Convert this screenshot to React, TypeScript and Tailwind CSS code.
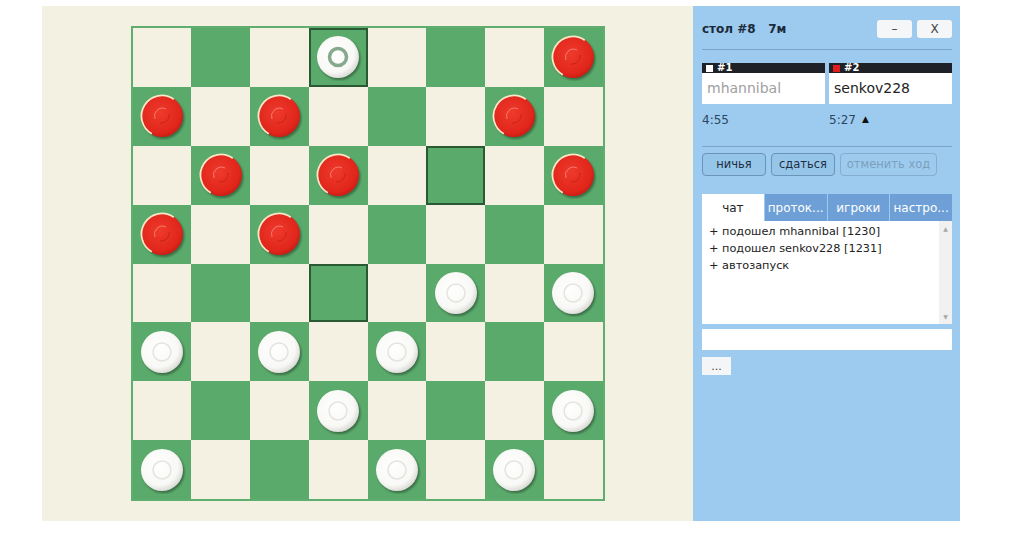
import React from "react";

type P = "r" | "w" | "ws";

const pieces: Record<string, P> = {
  "0-3": "ws", "0-7": "r",
  "1-0": "r", "1-2": "r", "1-6": "r",
  "2-1": "r", "2-3": "r", "2-7": "r",
  "3-0": "r", "3-2": "r",
  "4-5": "w", "4-7": "w",
  "5-0": "w", "5-2": "w", "5-4": "w",
  "6-3": "w", "6-7": "w",
  "7-0": "w", "7-4": "w", "7-6": "w",
};
const highlighted = new Set(["0-3", "2-5", "4-3"]);

function Piece({ kind }: { kind: P }) {
  const red = kind === "r";
  return (
    <svg width="48" height="48" viewBox="0 0 48 48" className="block">
      <defs>
        <filter id="pshadow" x="-20%" y="-20%" width="140%" height="140%">
          <feGaussianBlur stdDeviation="1.3" />
        </filter>
        <radialGradient id="redg" cx="45%" cy="42%" r="60%">
          <stop offset="0%" stopColor="#ee3a2c" />
          <stop offset="80%" stopColor="#e1261b" />
          <stop offset="100%" stopColor="#c81d14" />
        </radialGradient>
        <radialGradient id="whg" cx="42%" cy="40%" r="62%">
          <stop offset="0%" stopColor="#ffffff" />
          <stop offset="75%" stopColor="#f8f8f6" />
          <stop offset="100%" stopColor="#d9d9d4" />
        </radialGradient>
      </defs>
      <circle cx="25.5" cy="26" r="21" fill="rgba(0,0,0,0.35)" filter="url(#pshadow)" />
      <circle cx="24" cy="24" r="21" fill={red ? "url(#redg)" : "url(#whg)"} />
      {red ? (
        <>
          <path d="M13.75 41.75 A20.5 20.5 0 1 1 35.76 7.21" fill="none" stroke="#f6e8c8" strokeWidth="1.8" />
          <path d="M17 27 A8 8 0 0 1 28 17" fill="none" stroke="rgba(255,210,200,0.45)" strokeWidth="1" />
          <path d="M31 22 A8 8 0 0 1 22 31" fill="none" stroke="rgba(140,10,10,0.35)" strokeWidth="1" />
        </>
      ) : kind === "ws" ? (
        <circle cx="24" cy="24" r="8.5" fill="none" stroke="#86a98d" strokeWidth="3.5" />
      ) : (
        <>
          <circle cx="24" cy="24" r="9" fill="none" stroke="#e4e4df" strokeWidth="1.5" />
        </>
      )}
    </svg>
  );
}

function Board() {
  const cells = [];
  for (let r = 0; r < 8; r++) {
    for (let c = 0; c < 8; c++) {
      const key = `${r}-${c}`;
      const dark = (r + c) % 2 === 1;
      const hl = highlighted.has(key);
      const p = pieces[key];
      cells.push(
        <div
          key={key}
          className={`flex items-center justify-center ${dark ? "bg-[#5aaa6b]" : "bg-[#f4f1e2]"} ${hl ? "border-2 border-[#2a5a33]" : ""}`}
        >
          {p && <Piece kind={p} />}
        </div>
      );
    }
  }
  return (
    <div className="border-2 border-[#5fae70] bg-[#5fae70]">
      <div className="grid grid-cols-8 grid-rows-8 w-[470px] h-[471px]">{cells}</div>
    </div>
  );
}

function PlayerBox({ num, sq, name, dim }: { num: string; sq: string; name: string; dim?: boolean }) {
  return (
    <div className="flex-1 flex flex-col">
      <div className="h-[10px] bg-[#1e2226] flex items-center px-[4px] gap-[4px]">
        <span className={`w-[7px] h-[7px] ${sq}`} />
        <span className="text-[10px] leading-none font-bold text-white">{num}</span>
      </div>
      <div className={`h-[31px] bg-white flex items-center px-[5px] text-[14px] ${dim ? "text-[#a0a0a0]" : "text-[#222]"}`}>
        {name}
      </div>
    </div>
  );
}

export default function App() {
  return (
    <div className="w-[1024px] h-[549px] bg-white" style={{ fontFamily: '"DejaVu Sans", Verdana, sans-serif' }}>
      <div className="absolute left-[42px] top-[6px] flex w-[918px] h-[515px]">
        <div className="w-[651px] h-full bg-[#f3f1e1] flex items-center justify-center">
          <Board />
        </div>
        <div className="w-[267px] h-full bg-[#9dcbef] pl-[9px] pr-[8px] pt-[14px] flex flex-col">
          <div className="flex items-center justify-between h-[18px]">
            <div className="text-[12px] font-bold text-[#1a2a3a] whitespace-pre">стол #8   7м</div>
            <div className="flex gap-[5px]">
              <button className="w-[35px] h-[18px] rounded-[3px] bg-[#f5f6f7] text-[12px] text-[#444] leading-none">–</button>
              <button className="w-[35px] h-[18px] rounded-[3px] bg-[#f5f6f7] text-[12px] text-[#444] leading-none">X</button>
            </div>
          </div>
          <div className="h-px bg-[#7aa5c8] mt-[11px]" />
          <div className="flex gap-[4px] mt-[13px]">
            <PlayerBox num="#1" sq="bg-white" name="mhannibal" dim />
            <PlayerBox num="#2" sq="bg-[#e21b1b]" name="senkov228" />
          </div>
          <div className="flex gap-[4px] mt-[7px] text-[12px] text-[#2b4660]">
            <div className="flex-1">4:55</div>
            <div className="flex-1 flex items-center gap-[6px]">
              5:27 <span className="text-[9px] text-[#111]">▲</span>
            </div>
          </div>
          <div className="h-px bg-[#7aa5c8] mt-[17px]" />
          <div className="flex gap-[5px] mt-[6px]">
            <button className="w-[64px] h-[23px] rounded-[4px] border border-[#6a93b8] bg-[#96c5ea] text-[11.5px] text-[#1f2f3f]">ничья</button>
            <button className="w-[64px] h-[23px] rounded-[4px] border border-[#6a93b8] bg-[#96c5ea] text-[11.5px] text-[#1f2f3f]">сдаться</button>
            <button className="w-[97px] h-[23px] rounded-[4px] border border-[#84add0] bg-[#9dcbef] text-[11.5px] text-[#7d9fbb]">отменить ход</button>
          </div>
          <div className="flex mt-[18px] h-[27px] text-[12px]">
            <div className="flex-1 bg-white flex items-center justify-center text-[#222]">чат</div>
            <div className="flex-1 bg-[#6e9fd6] flex items-center justify-center text-white border-l border-[#9dcbef]">проток...</div>
            <div className="flex-1 bg-[#6e9fd6] flex items-center justify-center text-white border-l border-[#9dcbef]">игроки</div>
            <div className="flex-1 bg-[#6e9fd6] flex items-center justify-center text-white border-l border-[#9dcbef]">настро...</div>
          </div>
          <div className="h-[103px] bg-white flex">
            <div className="flex-1 pl-[7px] pt-[2px] text-[11.3px] leading-[17px] text-[#222]">
              <div>+ подошел mhannibal [1230]</div>
              <div>+ подошел senkov228 [1231]</div>
              <div>+ автозапуск</div>
            </div>
            <div className="w-[13px] bg-[#f1f1f1] flex flex-col justify-between items-center py-[3px] text-[6px] text-[#a8a8a8]">
              <span>▲</span>
              <span>▼</span>
            </div>
          </div>
          <div className="h-[21px] bg-white mt-[5px]" />
          <button className="w-[29px] h-[18px] bg-[#f3f5f7] mt-[7px] text-[11px] text-[#444] leading-none">...</button>
        </div>
      </div>
    </div>
  );
}
